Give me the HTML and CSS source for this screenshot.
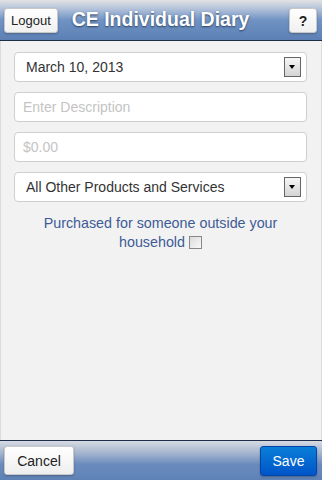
FILE: index.html
```html
<!DOCTYPE html>
<html lang="en">
<head>
<meta charset="UTF-8">
<meta name="viewport" content="width=device-width, initial-scale=1.0">
<title>CE Individual Diary</title>
<link rel="stylesheet" href="styles.css">
</head>
<body>
<div id="page">
    <div class="header">
        <button class="hdr-btn">Logout</button>
        <h1>CE Individual Diary</h1>
        <button class="hdr-btn help">?</button>
    </div>

    <div class="content">
        <div class="field select">
            <span>March 10, 2013</span>
            <span class="arrow"></span>
        </div>
        <div class="field placeholder">Enter Description</div>
        <div class="field placeholder">$0.00</div>
        <div class="field select">
            <span>All Other Products and Services</span>
            <span class="arrow"></span>
        </div>
        <p class="purchased">Purchased for someone outside your household <span class="check"></span></p>
    </div>

    <div class="footer">
        <button class="cancel">Cancel</button>
        <button class="save">Save</button>
    </div>
</div>
</body>
</html>
```

FILE: styles.css
```css
html, body {
    margin: 0;
    padding: 0;
    height: 100%;
}

body {
    font-family: "Liberation Sans", Arial, sans-serif;
    background-color: #f2f2f2;
    color: #333;
}

#page {
    display: flex;
    flex-direction: column;
    height: 480px;
    border-left: 1px solid #dcdcdc;
    border-right: 1px solid #dcdcdc;
    box-sizing: border-box;
}

.header {
    height: 40px;
    display: grid;
    grid-template-columns: 1fr auto 1fr;
    align-items: center;
    padding: 0 5px 0 4px;
    background: linear-gradient(#e2e2e2 0%, #b3c2da 22%, #7093c3 50%, #5c80b4 100%);
    border-bottom: 1px solid #1c2e4a;
    margin: 0 -1px;
}

.header h1 {
    margin: 0 0 2px 0;
    font-size: 19.5px;
    font-weight: bold;
    color: #fff;
    text-shadow: 0 1px 2px #2a3f5f;
}

button {
    font-family: "Liberation Sans", Arial, sans-serif;
    cursor: pointer;
}

.hdr-btn {
    justify-self: start;
    height: 25px;
    padding: 0 6px;
    font-size: 13px;
    color: #222;
    background: linear-gradient(#ffffff, #f0f0f0);
    border: 1px solid #c8c8c8;
    border-radius: 3px;
    box-shadow: 0 1px 2px rgba(0, 0, 0, 0.25);
    margin-top: 1px;
}

.help {
    justify-self: end;
    width: 28px;
    font-size: 14px;
    font-weight: bold;
}

.content {
    flex: 1;
    padding: 11px 14px 0 13px;
}

.field {
    height: 30px;
    box-sizing: border-box;
    background-color: #fff;
    border: 1px solid #cfcfcf;
    border-radius: 4px;
    margin-bottom: 10px;
    display: flex;
    align-items: center;
    padding: 0 5px 0 11px;
    font-size: 14px;
    color: #333;
}

.placeholder {
    color: #c4c4c4;
    padding-left: 8px;
}

.select {
    justify-content: space-between;
}

.arrow {
    width: 17px;
    height: 20px;
    box-sizing: border-box;
    border: 1px solid #666;
    background: linear-gradient(#f6f6f6, #d4d4d4);
    position: relative;
}

.arrow::after {
    content: "";
    position: absolute;
    left: 4px;
    top: 7px;
    border-left: 3.5px solid transparent;
    border-right: 3.5px solid transparent;
    border-top: 4px solid #000;
}

.purchased {
    margin: 12px 8px 0 8px;
    text-align: center;
    font-size: 14.3px;
    line-height: 19px;
    color: #3e5b96;
}

.check {
    display: inline-block;
    width: 11px;
    height: 11px;
    border: 1px solid #888;
    background: linear-gradient(135deg, #dcdcdc, #f8f8f8);
    vertical-align: -2px;
}

.footer {
    height: 39px;
    display: flex;
    align-items: center;
    justify-content: space-between;
    padding: 0 5px 0 4px;
    border-top: 1px solid #1c2e4a;
    background: linear-gradient(#d6dae2 0%, #a6b6cf 30%, #6a8bbc 60%, #5f82b6 100%);
    margin: 0 -1px;
}

.cancel {
    width: 70px;
    height: 29px;
    font-size: 14px;
    color: #222;
    background: linear-gradient(#ffffff, #eeeeee);
    border: 1px solid #c8c8c8;
    border-radius: 3px;
    box-shadow: 0 1px 2px rgba(0, 0, 0, 0.25);
}

.save {
    width: 57px;
    height: 30px;
    font-size: 14px;
    color: #fff;
    background: linear-gradient(#0a7fd8, #0055c9);
    border: 1px solid #0047a8;
    border-radius: 3px;
    box-shadow: 0 1px 2px rgba(0, 0, 0, 0.25);
}
```
